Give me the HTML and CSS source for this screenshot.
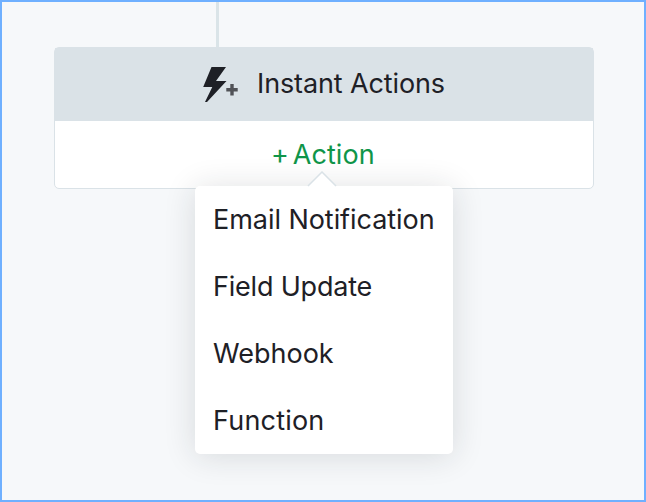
FILE: index.html
```html
<!DOCTYPE html>
<html lang="en">
  <head>
    <meta charset="UTF-8" />
    <meta name="viewport" content="width=device-width, initial-scale=1.0" />
    <title>Instant Actions</title>
    <link rel="stylesheet" href="styles.css">
  </head>
  <body>
    <div class="canvas">
      <div class="connector"></div>
      <div class="card">
        <div class="card-header">
          <svg class="bolt" width="36" height="36" viewBox="0 0 36 36">
            <path d="M8.5 0H23L13 14H23.5L4 35H2L9.3 20H.2z" fill="#1e2026" />
            <path d="M27.3 17h3.4v4h4v3.4h-4v4h-3.4v-4h-4V21h4z" fill="#505257" />
          </svg>
          <span class="title">Instant Actions</span>
        </div>
        <div class="card-body">
          <a class="add-action">+ Action</a>
        </div>
        <div class="menu">
          <svg class="arrow" width="30" height="16" viewBox="0 0 30 16">
            <path d="M1 15.5L15 1.5L29 15.5V16H1z" fill="#fff" />
            <path d="M1 15L15 1L29 15" fill="none" stroke="#dae2e7" stroke-width="1.5" />
          </svg>
          <div class="item email">Email Notification</div>
          <div class="item field">Field Update</div>
          <div class="item webhook">Webhook</div>
          <div class="item function">Function</div>
        </div>
      </div>
    </div>
  </body>
</html>
```

FILE: styles.css
```css
* {
  box-sizing: border-box;
}

body {
  margin: 0;
  font-family: Inter, "Liberation Sans", sans-serif;
  font-size: 27px;
  color: #1e2026;
}

.canvas {
  width: 646px;
  height: 502px;
  border: 2px solid #6fb0ff;
  background-color: #f6f8fa;
  overflow: hidden;
}

.connector {
  width: 3px;
  height: 45px;
  margin-left: 214px;
  background-color: #dae4e8;
}

.card {
  position: relative;
  width: 540px;
  height: 142px;
  margin-left: 52px;
  border: 1px solid #dae2e7;
  border-radius: 5px;
  background-color: white;
}

.card-header {
  display: flex;
  height: 73px;
  padding: 19px 0 0 148px;
  background-color: #dae2e7;
}

.title {
  margin-left: 18px;
  line-height: 34px;
  letter-spacing: -0.12px;
  white-space: nowrap;
}

.card-body {
  padding-left: 216px;
}

.add-action {
  line-height: 67px;
  color: #0f9549;
  letter-spacing: 0.1px;
  word-spacing: -4px;
}

.menu {
  position: absolute;
  top: 138px;
  left: 140px;
  width: 258px;
  height: 268px;
  padding-left: 18px;
  border-radius: 5px;
  background-color: white;
  box-shadow: 0 2px 32px rgba(30, 35, 40, 0.14);
}

.arrow {
  position: absolute;
  top: -15px;
  left: 112px;
}

.item {
  line-height: 67px;
  white-space: nowrap;
}

.email {
  letter-spacing: -0.05px;
}

.field {
  letter-spacing: -0.2px;
}

.function {
  letter-spacing: 0.2px;
}
```
